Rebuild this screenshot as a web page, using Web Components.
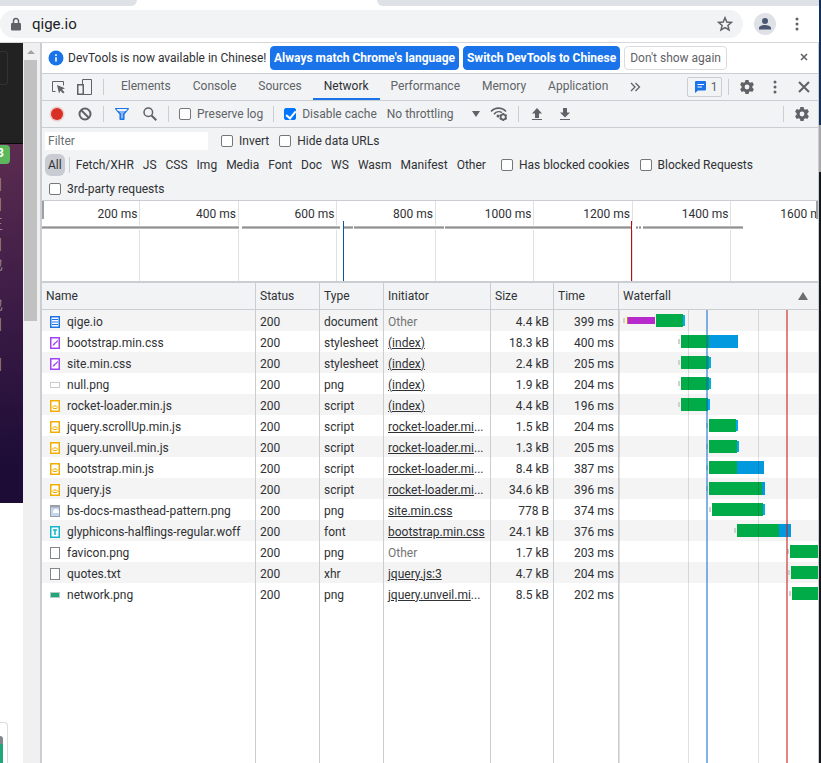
<!DOCTYPE html>
<html lang="en">
<head>
<meta charset="utf-8">
<title>qige.io</title>
<style>
	html, body {
		height: 100%;
		margin: 0;
	}
	body {
		display: flex;
		overflow: hidden;
		background: #fff;
		color: #303134;
		font-family: Roboto, "Noto Sans CJK SC", sans-serif;
		font-size: 12px;
		line-height: 16px;
	}
	.window {
		flex: 1;
		min-width: 0;
		display: flex;
		flex-direction: column;
	}
	.content {
		flex: 1;
		min-height: 0;
		display: flex;
	}
	.desktop {
		width: 2px;
		background: linear-gradient(#12305c 125px, #a8a8a8 125px, #a8a8a8 172px, #15191c 172px);
	}
	dev-tools {
		flex: 1;
		min-width: 0;
	}
</style>
</head>
<body>
<div class="window">
	<browser-bar>qige.io</browser-bar>
	<div class="content">
		<page-strip></page-strip>
		<scroll-bar></scroll-bar>
		<dev-tools>
			<info-bar>DevTools is now available in Chinese!</info-bar>
			<panel-tabs></panel-tabs>
			<network-toolbar></network-toolbar>
			<filter-bar></filter-bar>
			<time-overview></time-overview>
			<request-table></request-table>
		</dev-tools>
	</div>
</div>
<div class="desktop"></div>

<script>
const BASE = `
	:host, * { box-sizing: border-box; }
	button, input, select { font: inherit; color: inherit; margin: 0; }
	button { display: flex; align-items: center; justify-content: center; padding: 0; border: none; background: none; }
	svg { display: block; flex: none; }
`;

function attach(el, html) {
	const template = document.createElement("template");
	template.innerHTML = `<style>${BASE}</style>` + html;
	el.attachShadow({ mode: "open" });
	el.shadowRoot.appendChild(template.content.cloneNode(true));
}

const ICONS = {
	lock: [16, `<path d="M4 7h8a1 1 0 0 1 1 1v5.500a1 1 0 0 1-1 1H4a1 1 0 0 1-1-1V8a1 1 0 0 1 1-1z"/><path d="M5.500 7.500V5a2.500 2.500 0 0 1 5 0v2.500" fill="none" stroke="currentColor" stroke-width="1.500"/>`],
	star: [16, `<path d="M8 1.800l1.800 4.200 4.600.4-3.500 3 1.100 4.500L8 11.500l-4 2.400 1.100-4.500-3.500-3 4.600-.4z" fill="none" stroke="currentColor" stroke-width="1.500"/>`],
	person: [22, `<circle cx="11" cy="11" r="11" fill="#dee1e6"/><circle cx="11" cy="8" r="3"/><path d="M5 16.500v-1.500c0-2 4-3 6-3s6 1 6 3v1.500z"/>`],
	dots: [16, `<circle cx="8" cy="3" r="1.500"/><circle cx="8" cy="8" r="1.500"/><circle cx="8" cy="13" r="1.500"/>`],
	info: [16, `<circle cx="8" cy="8" r="7.500" fill="#1a73e8"/><path d="M7.200 7.200h1.600v4.300H7.200zM7.200 4.300h1.600v1.700H7.200z" fill="#fff"/>`],
	cross: [16, `<path d="M3 3l10 10M13 3L3 13" stroke="currentColor" stroke-width="2"/>`],
	smallcross: [16, `<path d="M5 4l6 6M11 4l-6 6" stroke="currentColor" stroke-width="1.600"/>`],
	inspect: [16, `<path d="M5.500 12.500H2.500v-10h11v4" fill="none" stroke="currentColor"/><path d="M7 6l8 3.200-3 1.300 2.500 2.800-1.400 1.200-2.600-2.800L9 14.500z"/>`],
	device: [18, `<path d="M6.500 6V1.500h9v15h-8" fill="none" stroke="currentColor"/><rect x="1.750" y="6.750" width="5.500" height="9.500" fill="none" stroke="currentColor" stroke-width="1.500"/>`],
	message: [16, `<path d="M4 2h9a1 1 0 0 1 1 1v7.500a1 1 0 0 1-1 1H6L3 14V3a1 1 0 0 1 1-1z" fill="#1a73e8"/><path d="M5.500 5.500h6.500M5.500 8h4.500" stroke="#fff"/>`],
	gear: [16, `<path d="M6.400 1h3.200l.4 2 1.300.8 2-.7 1.600 2.700-1.500 1.400v1.600l1.500 1.400-1.600 2.700-2-.7-1.300.8-.4 2H6.400L6 13l-1.300-.8-2 .7-1.600-2.700 1.500-1.400V7.200L1.100 5.800l1.600-2.700 2 .7L6 3zM8 5.600a2.400 2.400 0 1 0 0 4.800 2.400 2.400 0 0 0 0-4.800z" fill-rule="evenodd"/>`],
	record: [16, `<circle cx="8" cy="8" r="7.500" fill="#d93025" opacity=".2"/><circle cx="8" cy="8" r="6" fill="#d93025"/>`],
	clear: [16, `<circle cx="8" cy="8" r="5.500" fill="none" stroke="currentColor" stroke-width="2"/><path d="M4 4l8 8" stroke="currentColor" stroke-width="2"/>`],
	funnel: [16, `<path d="M1.800 2.700h12.400L9.800 8v5.300H6.200V8z" fill="#8ab4f8" stroke="#1a73e8" stroke-width="1.500" stroke-linejoin="round"/><path d="M2.500 3h11L12 5H4z" fill="#f1f3f4"/>`],
	search: [16, `<circle cx="6.300" cy="6.300" r="4.300" fill="none" stroke="currentColor" stroke-width="1.500"/><path d="M9.500 9.500l4.800 4.800" stroke="currentColor" stroke-width="2"/>`],
	wifi: [18, `<path d="M1 6.500C5 2 12 2 16 6.500M4 9.200C6.500 6.300 10 6.300 12 7.600" fill="none" stroke="currentColor" stroke-width="1.600"/><circle cx="8" cy="11" r="1.500"/><circle cx="13.200" cy="12" r="2.600" fill="none" stroke="currentColor" stroke-width="1.800"/><path d="M13.200 8v1.500M13.200 14.500V16M9.700 10l1.300.8M15.400 13.200l1.300.8M9.700 14l1.300-.8M15.400 10.800l1.300-.8" stroke="currentColor" stroke-width="1.600"/>`],
	upload: [16, `<path d="M8 2l5 5.500h-3V12H6V7.500H3z"/><path d="M3 13.500h10" stroke="currentColor"/>`],
	download: [16, `<path d="M8 11.500L3 6.500h3V2h4v4.500h3z"/><path d="M3 13.500h10" stroke="currentColor"/>`],
	more: [16, `<path d="M4 4l4 4-4 4M8.500 4l4 4-4 4" fill="none" stroke="currentColor" stroke-width="1.300"/>`]
};

/* file glyphs, 10 wide and 12 high */
const FILE = (color, inner) => `<rect x=".75" y=".75" width="8.500" height="10.500" fill="#fff" stroke="${color}" stroke-width="1.500"/>` + inner;
const FILE_ICONS = {
	doc: FILE("#1a73e8", `<path d="M2 3.500h6M2 6h6M2 8.500h6" stroke="#1a73e8"/>`),
	css: FILE("#a142f4", `<path d="M2.500 9l1-2.500 2-1.500L8 2.500 7.500 5l-2 1.500-1 1.500z" fill="#a142f4"/>`),
	js: FILE("#f2ae00", `<path d="M4 5.500L2.500 7.200 4 9M6 5.500l1.500 1.700L6 9M4 6h2M4 8.500h2" fill="none" stroke="#f2ae00"/>`),
	font: FILE("#12b5cb", `<path d="M3 4h4M5 3.500V9" stroke="#12b5cb" stroke-width="1.500"/>`),
	plain: `<rect x=".5" y=".5" width="9" height="11" fill="#fff" stroke="#80868b"/>`,
	blank: `<rect x=".5" y="3.500" width="9" height="5" fill="#fff" stroke="#ccc"/>`,
	pattern: `<rect x=".5" y=".5" width="9" height="11" fill="#c5d6f2" stroke="#9aa0a6"/><path d="M1 1h8v1.500H1z" fill="#9aa0a6"/><path d="M3 6l2-2h2l2 2v2H3z" fill="#fff"/>`,
	network: `<rect x=".5" y="3.500" width="9" height="5" fill="#1fa67a" stroke="#b9c9c4"/>`
};

class UiIcon extends HTMLElement {
	constructor() {
		super();
		const [size, body] = ICONS[this.getAttribute("name")];
		attach(this, `
			<style>:host { display: block; flex: none; }</style>
			<svg width="${size}" height="${size}" viewBox="0 0 ${size} ${size}" fill="currentColor" aria-hidden="true">${body}</svg>
		`);
	}
}

class CheckOption extends HTMLElement {
	constructor() {
		super();
		attach(this, `
			<style>
				:host { display: block; flex: none; }
				label { display: flex; align-items: center; gap: 6px; white-space: nowrap; }
				input { appearance: none; position: relative; width: 12px; height: 12px; border: 1px solid #767676; border-radius: 2px; background: #fff; }
				input:checked { border-color: #0075ff; background: #0075ff; }
				input:checked::after {
					content: "";
					position: absolute;
					left: 3px;
					top: 0;
					width: 4px;
					height: 8px;
					border: solid #fff;
					border-width: 0 2px 2px 0;
					transform: rotate(40deg);
				}
			</style>
			<label><input type="checkbox"><slot></slot></label>
		`);
		this.shadowRoot.querySelector("input").checked = this.hasAttribute("checked");
	}
}

class BrowserBar extends HTMLElement {
	constructor() {
		super();
		attach(this, `
			<style>
				:host { display: block; border-bottom: 1px solid #d5d7da; }
				.strip { display: flex; height: 6px; background: #fff; }
				.strip div { background: #dee1e6; }
				.before { width: 137px; border-radius: 0 0 6px 0; }
				.after { flex: 1; margin-left: 240px; border-radius: 0 0 0 6px; }
				.bar { display: flex; align-items: center; height: 36px; padding-right: 14px; color: #5f6368; }
				.omnibox { flex: 1; display: flex; align-items: center; gap: 8px; height: 28px; padding: 0 10px 0 8px; border-radius: 14px; background: #f1f3f4; }
				.url { flex: 1; color: #202124; font-size: 15px; line-height: 20px; }
				.person { margin: 0 13px 0 11px; color: #4a5672; }
			</style>
			<div class="strip"><div class="before"></div><div class="after"></div></div>
			<div class="bar">
				<div class="omnibox">
					<ui-icon name="lock"></ui-icon>
					<span class="url"><slot></slot></span>
					<button aria-label="Bookmark"><ui-icon name="star"></ui-icon></button>
				</div>
				<button class="person" aria-label="Profile"><ui-icon name="person"></ui-icon></button>
				<button aria-label="Menu"><ui-icon name="dots"></ui-icon></button>
			</div>
		`);
	}
}

class PageStrip extends HTMLElement {
	constructor() {
		super();
		attach(this, `
			<style>
				:host { display: flex; flex-direction: column; flex: none; width: 23px; overflow: hidden; background: #fff; }
				.nav { height: 101px; padding-top: 8px; background: #222; border-bottom: 1px solid #080808; }
				.toggle { width: 8px; height: 34px; border: 1px solid #333; border-left: none; border-radius: 0 4px 4px 0; }
				.hero { height: 359px; padding-top: 1px; background: linear-gradient(170deg, #5c2c50, #3c1c46 45%, #1c0c36 90%); }
				.badge { width: 10px; height: 19px; border-radius: 0 4px 4px 0; background: #5cb85c; color: #fff; font-weight: bold; display: flex; justify-content: flex-end; padding-right: 6px; line-height: 17px; overflow: hidden; }
				.lines { margin-top: 10px; width: 3px; overflow: hidden; color: #8e8a96; font-size: 14px; line-height: 20px; }
				.lines div { display: flex; justify-content: flex-end; height: 20px; }
				.card { width: 8px; height: 41px; margin-top: auto; padding-top: 13px; border: 1px solid #ddd; border-left: none; border-bottom: none; border-radius: 0 4px 0 0; }
				.logo { width: 3px; height: 28px; border-top: 8px solid #80868b; border-radius: 0 4px 0 0; background: #1fa67a; }
			</style>
			<div class="nav"><div class="toggle"></div></div>
			<div class="hero">
				<div class="badge">3</div>
				<div class="lines">
					<div>目</div><div>目</div><div>王</div><div>目</div><div>也</div><div></div><div>也</div><div>目</div><div></div><div>目</div>
				</div>
			</div>
			<div class="card"><div class="logo"></div></div>
		`);
	}
}

class ScrollBar extends HTMLElement {
	constructor() {
		super();
		attach(this, `
			<style>
				:host { display: flex; flex-direction: column; align-items: center; flex: none; width: 17px; padding-right: 2px; background: #f0f0f0; }
				.arrow { height: 17px; padding-top: 7px; }
				.thumb { width: 13px; height: 261px; background: #c1c1c1; }
			</style>
			<div class="arrow"><svg width="8" height="4"><path d="M0 4l4-4 4 4z" fill="#a3a3a3"/></svg></div>
			<div class="thumb"></div>
		`);
	}
}

class DevTools extends HTMLElement {
	constructor() {
		super();
		attach(this, `
			<style>
				:host { display: flex; flex-direction: column; border-left: 2px solid #cacdd1; border-right: 1px solid #cacdd1; }
				::slotted(*) { flex: none; }
				::slotted(request-table) { flex: 1; min-height: 0; }
			</style>
			<slot></slot>
		`);
	}
}

class InfoBar extends HTMLElement {
	constructor() {
		super();
		attach(this, `
			<style>
				:host { display: flex; align-items: center; gap: 4px; height: 31px; padding: 0 6px; border-bottom: 1px solid #cacdd1; background: #fff; }
				.text { width: 198px; white-space: nowrap; }
				button { flex: none; height: 24px; padding: 0 5px; border: 1px solid #dadce0; border-radius: 4px; color: #5f6368; white-space: nowrap; }
				button.primary { padding: 0 3px; border-color: #1a73e8; background: #1a73e8; color: #fff; font-weight: bold; }
				button.close { margin-left: auto; padding: 0; border: none; }
			</style>
			<ui-icon name="info"></ui-icon>
			<span class="text"><slot></slot></span>
			<button class="primary">Always match Chrome's language</button>
			<button class="primary">Switch DevTools to Chinese</button>
			<button>Don't show again</button>
			<button class="close" aria-label="Close"><ui-icon name="smallcross"></ui-icon></button>
		`);
	}
}

class PanelTabs extends HTMLElement {
	constructor() {
		super();
		const tabs = ["Elements", "Console", "Sources", "Network", "Performance", "Memory", "Application"];
		attach(this, `
			<style>
				:host { display: flex; align-items: center; height: 27px; padding: 0 6px 0 8px; border-bottom: 1px solid #cacdd1; background: #f1f3f4; color: #5f6368; }
				.device { margin: 0 9px 0 10px; }
				i { width: 1px; height: 16px; background: #cacdd1; }
				.tabs { display: flex; margin-left: 6px; height: 26px; }
				.tabs button { height: 26px; padding: 0 11px; border-bottom: 2px solid transparent; }
				.tabs button[aria-selected=true] { color: #303134; border-color: #1a73e8; }
				.more { padding: 0 8px; }
				.issues { margin: 0 6px 0 auto; height: 20px; width: 35px; gap: 3px; border: 1px solid #cacdd1; border-radius: 2px; }
				.gear { margin: 0 12px 0 10px; }
				.dots { margin-right: 13px; }
			</style>
			<button aria-label="Inspect"><ui-icon name="inspect"></ui-icon></button>
			<button class="device" aria-label="Toggle device"><ui-icon name="device"></ui-icon></button>
			<i></i>
			<div class="tabs" role="tablist">
				${tabs.map(t => `<button role="tab" aria-selected="${t === "Network"}">${t}</button>`).join("")}
			</div>
			<button class="more" aria-label="More tabs"><ui-icon name="more"></ui-icon></button>
			<button class="issues"><ui-icon name="message"></ui-icon>1</button>
			<i></i>
			<button class="gear" aria-label="Settings"><ui-icon name="gear"></ui-icon></button>
			<button class="dots" aria-label="More"><ui-icon name="dots"></ui-icon></button>
			<button aria-label="Close"><ui-icon name="cross"></ui-icon></button>
		`);
	}
}

class NetworkToolbar extends HTMLElement {
	constructor() {
		super();
		attach(this, `
			<style>
				:host { display: flex; align-items: center; gap: 10px; height: 27px; padding: 0 8px 0 7px; border-bottom: 1px solid #cacdd1; background: #f1f3f4; color: #5f6368; }
				i { flex: none; width: 1px; height: 16px; background: #cacdd1; }
				.group { display: flex; align-items: center; gap: 12px; }
				.throttle { position: relative; display: flex; align-items: center; width: 93px; }
				select { appearance: none; width: 100%; padding: 0; border: none; background: none; }
				.throttle svg { position: absolute; right: 0; }
				.end { margin-left: auto; }
			</style>
			<div class="group">
				<button aria-label="Record"><ui-icon name="record"></ui-icon></button>
				<button aria-label="Clear"><ui-icon name="clear"></ui-icon></button>
			</div>
			<i></i>
			<div class="group">
				<button aria-label="Filter"><ui-icon name="funnel"></ui-icon></button>
				<button aria-label="Search"><ui-icon name="search"></ui-icon></button>
			</div>
			<i></i>
			<check-option>Preserve log</check-option>
			<i></i>
			<check-option checked>Disable cache</check-option>
			<div class="throttle">
				<select aria-label="Throttling"><option>No throttling</option></select>
				<svg width="8" height="6"><path d="M0 0h8L4 6z" fill="#5f6368"/></svg>
			</div>
			<button aria-label="Network conditions"><ui-icon name="wifi"></ui-icon></button>
			<i></i>
			<div class="group">
				<button aria-label="Import"><ui-icon name="upload"></ui-icon></button>
				<button aria-label="Export"><ui-icon name="download"></ui-icon></button>
			</div>
			<i class="end"></i>
			<button aria-label="Network settings"><ui-icon name="gear"></ui-icon></button>
		`);
	}
}

class FilterBar extends HTMLElement {
	constructor() {
		super();
		const types = ["Fetch/XHR", "JS", "CSS", "Img", "Media", "Font", "Doc", "WS", "Wasm", "Manifest", "Other"];
		attach(this, `
			<style>
				:host { display: block; height: 73px; padding: 1px 3px 0; border-bottom: 1px solid #cacdd1; background: #f1f3f4; }
				.row { display: flex; align-items: center; height: 24px; }
				.text { gap: 10px; }
				input { width: 163px; height: 18px; margin-right: 3px; padding: 0 3px; border: none; background: #fff; }
				input::placeholder { color: #6b6f73; opacity: 1; }
				.types button { height: 22px; padding: 0 5px 0 4px; }
				.types .all { height: 22px; padding: 0 3px; border-radius: 6px; background: #c9ccd2; }
				i { width: 1px; height: 16px; margin: 0 2px 0 4px; background: #cacdd1; }
				.types check-option { margin-left: 10px; }
				.party { padding-left: 4px; }
			</style>
			<div class="row text">
				<input type="text" placeholder="Filter" aria-label="Filter">
				<check-option>Invert</check-option>
				<check-option>Hide data URLs</check-option>
			</div>
			<div class="row types">
				<button class="all">All</button><i></i>
				${types.map(t => `<button>${t}</button>`).join("")}
				<check-option>Has blocked cookies</check-option>
				<check-option>Blocked Requests</check-option>
			</div>
			<div class="row party"><check-option>3rd-party requests</check-option></div>
		`);
	}
}

class TimeOverview extends HTMLElement {
	constructor() {
		super();
		const runs = [[0, 197], [200, 98], [301, 10], [312, 90], [403, 187], [594, 2], [597, 2], [601, 100]];
		attach(this, `
			<style>
				:host { display: block; position: relative; height: 81px; overflow: hidden; background: #fff; border-bottom: 1px solid #cacdd1; }
				.scale { display: flex; height: 80px; }
				.scale div { flex: none; width: calc(100% * 148 / 1166); border-right: 1px solid #e0e0e0; padding: 5px 2px 0 0; text-align: right; white-space: nowrap; }
				svg { position: absolute; left: 0; top: 0; width: 100%; height: 100%; }
				.grip { position: absolute; top: 0; width: 2px; height: 18px; background: #9aa0a6; }
				.grip.right { right: 0; }
			</style>
			<div class="scale">
				${[200, 400, 600, 800, 1000, 1200, 1400, 1600].map(t => `<div>${t} ms</div>`).join("")}
			</div>
			<svg aria-hidden="true">
				<rect y="24" width="100%" height="5" fill="#fff"/>
				${runs.map(([x, w]) => `<rect x="${x}" y="25" width="${w}" height="3" fill="#bababa"/><rect x="${x}" y="26" width="${w}" height="1" fill="#909090"/>`).join("")}
				<rect x="301" y="20" width="1" height="61" fill="#0b57a4"/>
				<rect x="589" y="20" width="1" height="61" fill="#b80d0d"/>
			</svg>
			<div class="grip"></div>
			<div class="grip right"></div>
		`);
	}
}

/* Draws one timing bar. parts: "kind:start:end" in pixels from the column's left edge */
class WaterfallBar extends HTMLElement {
	constructor() {
		super();
		const shape = {
			wait: [8, 5, "#d0d0d0"],
			dns: [7, 7, "#e8710a"],
			connect: [7, 7, "#b62acb"],
			ttfb: [4, 13, "#00ab48"],
			tail: [5, 11, "#03a9f4"],
			load: [4, 13, "#0299de"]
		};
		const rects = this.getAttribute("parts").split(" ").map(p => {
			const [kind, a, b] = p.split(":");
			const [y, h, fill] = shape[kind];
			return `<rect x="${a}" y="${y}" width="${b - a}" height="${h}" fill="${fill}"/>`;
		});
		attach(this, `
			<style>:host { display: block; } svg { width: 100%; height: 21px; }</style>
			<svg aria-hidden="true">${rects.join("")}</svg>
		`);
	}
}

const REQUESTS = [
	["doc", "qige.io", "document", "Other", "4.4 kB", "399 ms", "wait:4:6 dns:8:9 connect:9:36 ttfb:37:64 tail:64:66"],
	["css", "bootstrap.min.css", "stylesheet", "(index)", "18.3 kB", "400 ms", "wait:59:61 ttfb:62:90 load:90:119"],
	["css", "site.min.css", "stylesheet", "(index)", "2.4 kB", "205 ms", "wait:59:61 ttfb:62:90 tail:90:92"],
	["blank", "null.png", "png", "(index)", "1.9 kB", "204 ms", "wait:59:61 ttfb:62:90 tail:90:92"],
	["js", "rocket-loader.min.js", "script", "(index)", "4.4 kB", "196 ms", "wait:59:61 ttfb:62:89 tail:89:91"],
	["js", "jquery.scrollUp.min.js", "script", "rocket-loader.mi...", "1.5 kB", "204 ms", "wait:87:89 ttfb:90:117 tail:117:119"],
	["js", "jquery.unveil.min.js", "script", "rocket-loader.mi...", "1.3 kB", "205 ms", "wait:87:89 ttfb:90:118 tail:118:120"],
	["js", "bootstrap.min.js", "script", "rocket-loader.mi...", "8.4 kB", "387 ms", "wait:87:89 ttfb:90:118 load:118:145"],
	["js", "jquery.js", "script", "rocket-loader.mi...", "34.6 kB", "396 ms", "wait:87:89 ttfb:90:143 load:143:146"],
	["pattern", "bs-docs-masthead-pattern.png", "png", "site.min.css", "778 B", "374 ms", "wait:90:92 ttfb:93:144 tail:144:146"],
	["font", "glyphicons-halflings-regular.woff", "font", "bootstrap.min.css", "24.1 kB", "376 ms", "wait:115:117 ttfb:118:160 load:160:172"],
	["plain", "favicon.png", "png", "Other", "1.7 kB", "203 ms", "wait:168:170 ttfb:171:260"],
	["plain", "quotes.txt", "xhr", "jquery.js:3", "4.7 kB", "204 ms", "wait:169:171 ttfb:172:260"],
	["network", "network.png", "png", "jquery.unveil.mi...", "8.5 kB", "202 ms", "wait:170:172 ttfb:173:260"]
];

class RequestTable extends HTMLElement {
	constructor() {
		super();
		const initiator = text => {
			if (text === "Other") return `<span class="muted">Other</span>`;
			const cut = text.endsWith("...");
			return `<a href="#">${cut ? text.slice(0, -3) : text}</a>${cut ? "..." : ""}`;
		};
		const rows = REQUESTS.map(([icon, name, type, init, size, time, parts]) => `
			<tr>
				<td><div class="name"><svg width="10" height="12">${FILE_ICONS[icon]}</svg>${name}</div></td>
				<td>200</td>
				<td>${type}</td>
				<td>${initiator(init)}</td>
				<td class="num">${size}</td>
				<td class="num">${time}</td>
				<td class="fall"><waterfall-bar parts="${parts}"></waterfall-bar></td>
			</tr>`).join("");
		attach(this, `
			<style>
				:host { display: block; position: relative; border-top: 1px solid #cacdd1; overflow: hidden; background: #fff; }
				table { width: 100%; height: 100%; table-layout: fixed; border-collapse: separate; border-spacing: 0; }
				th, td { height: 21px; padding: 2px 4px 0; border-right: 1px solid #cacdd1; overflow: hidden; text-align: left; font-weight: normal; white-space: nowrap; }
				th { height: 27px; padding-top: 0; border-bottom: 1px solid #cacdd1; background: #f1f3f4; }
				th:last-child, td:last-child { border-right: none; }
				tbody tr:nth-child(odd):not(.filler) { background: #f4f4f4; }
				.name { display: flex; align-items: center; gap: 7px; padding-left: 4px; }
				.num { text-align: right; }
				.fall { padding: 0; }
				.filler td { height: auto; padding: 0; }
				.sort { display: flex; align-items: center; justify-content: space-between; padding-right: 6px; }
				a { color: inherit; text-decoration: underline; }
				.muted { color: #757575; }
				.lines { position: absolute; left: 577px; right: 0; top: 27px; bottom: 0; overflow: hidden; pointer-events: none; }
				.lines svg { width: 100%; height: 100%; }
			</style>
			<table>
				<colgroup>
					<col style="width: 214px"><col style="width: 64px"><col style="width: 64px"><col style="width: 107px">
					<col style="width: 63px"><col style="width: 65px"><col>
				</colgroup>
				<thead>
					<tr>
						<th>Name</th><th>Status</th><th>Type</th><th>Initiator</th><th>Size</th><th>Time</th>
						<th><div class="sort">Waterfall<svg width="10" height="8"><path d="M5 0l5 8H0z" fill="#6e6e6e"/></svg></div></th>
					</tr>
				</thead>
				<tbody>
					${rows}
					<tr class="filler"><td></td><td></td><td></td><td></td><td></td><td></td><td></td></tr>
				</tbody>
			</table>
			<div class="lines">
				<svg aria-hidden="true">
					<path d="M.5 0v1000M69.500 0v1000M139.500 0v1000" stroke="#000" stroke-opacity=".12"/>
					<rect x="87" width="2" height="100%" fill="#0867cb" opacity=".5"/>
					<rect x="167" width="2" height="100%" fill="#c5221f" opacity=".55"/>
				</svg>
			</div>
		`);
	}
}

customElements.define("ui-icon", UiIcon);
customElements.define("check-option", CheckOption);
customElements.define("browser-bar", BrowserBar);
customElements.define("page-strip", PageStrip);
customElements.define("scroll-bar", ScrollBar);
customElements.define("dev-tools", DevTools);
customElements.define("info-bar", InfoBar);
customElements.define("panel-tabs", PanelTabs);
customElements.define("network-toolbar", NetworkToolbar);
customElements.define("filter-bar", FilterBar);
customElements.define("time-overview", TimeOverview);
customElements.define("waterfall-bar", WaterfallBar);
customElements.define("request-table", RequestTable);
</script>
</body>
</html>
